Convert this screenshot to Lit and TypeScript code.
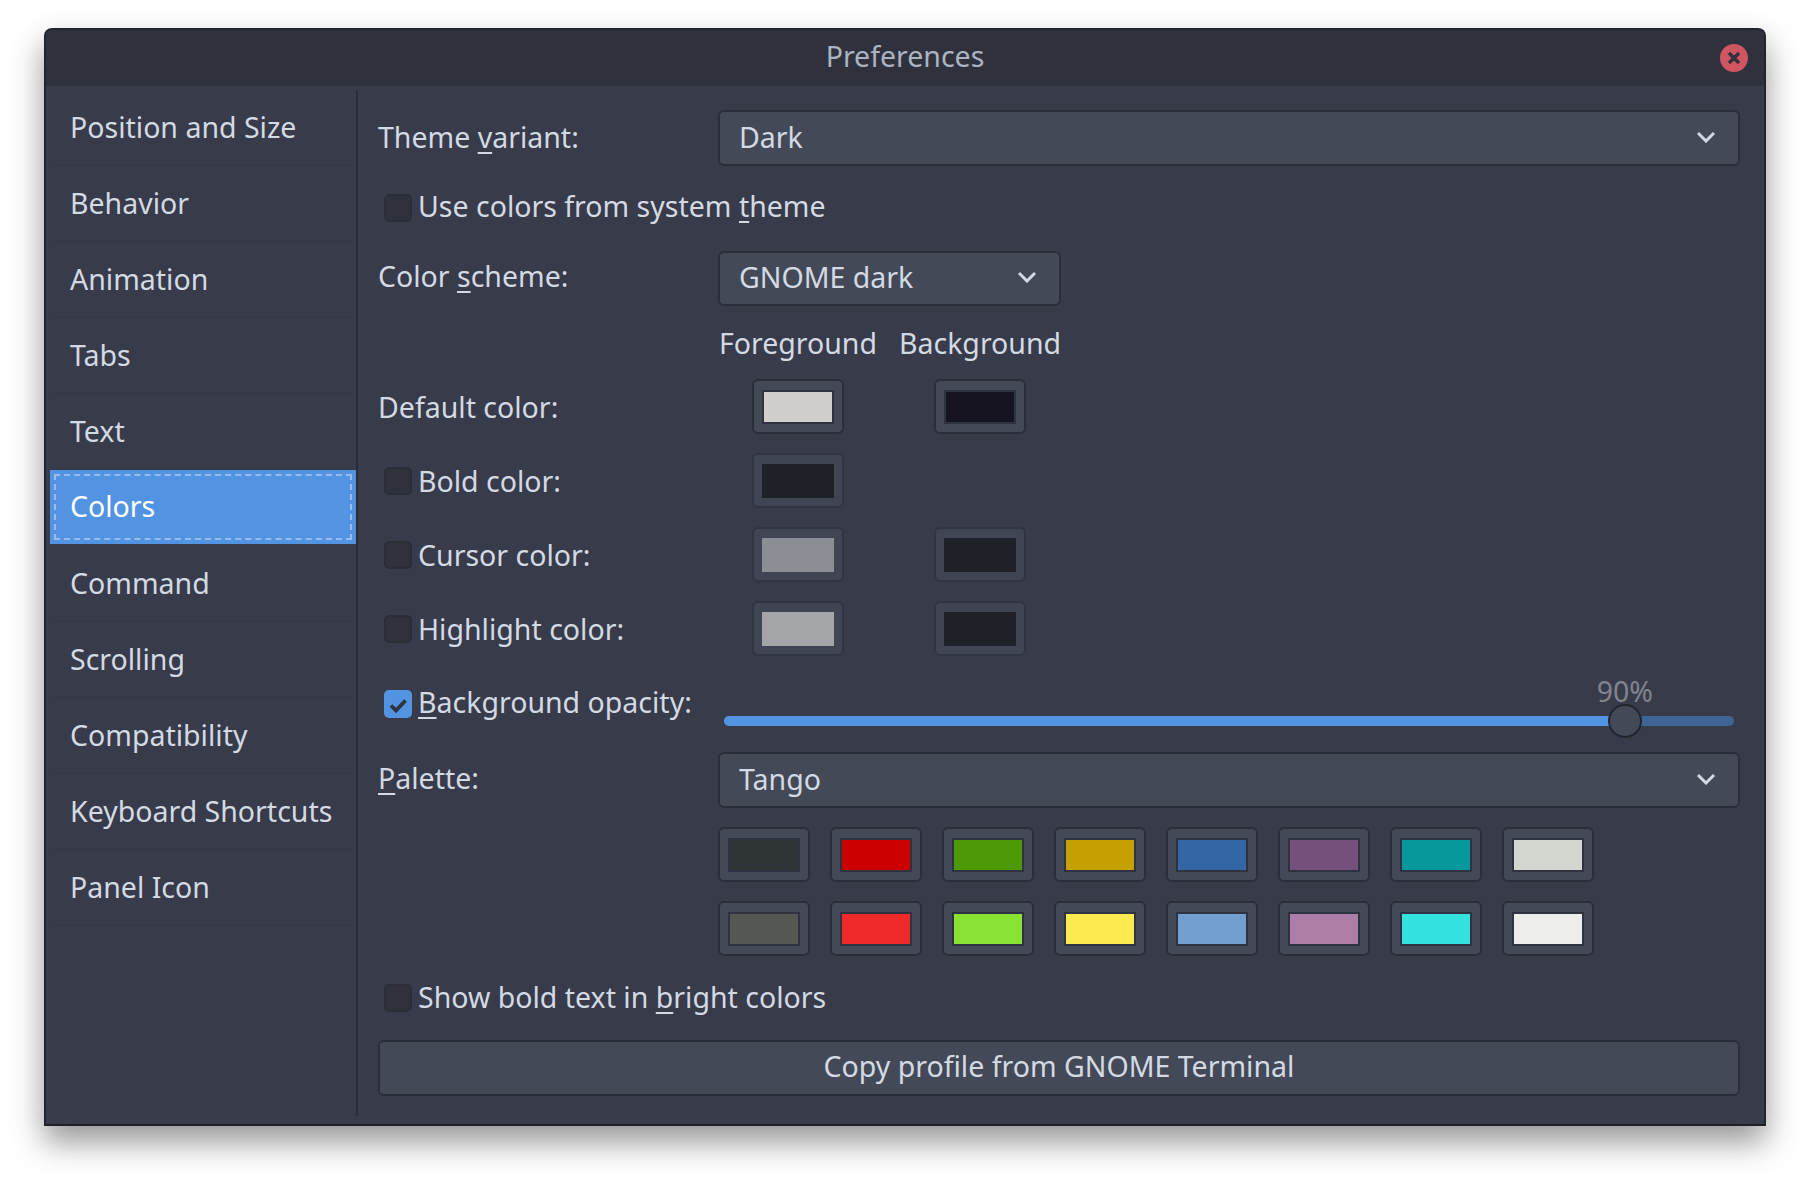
import { LitElement, html, css, svg } from 'lit';
import { customElement, state } from 'lit/decorators.js';

const PAGES = [
  'Position and Size', 'Behavior', 'Animation', 'Tabs', 'Text', 'Colors',
  'Command', 'Scrolling', 'Compatibility', 'Keyboard Shortcuts', 'Panel Icon',
];

const PALETTE = [
  '#2e3436', '#cc0000', '#4e9a06', '#c4a000', '#3465a4', '#75507b', '#06989a', '#d3d7cf',
  '#555753', '#ef2929', '#8ae234', '#fce94f', '#729fcf', '#ad7fa8', '#34e2e2', '#eeeeec',
];

const chevron = svg`<svg class="chevron" width="18" height="12" viewBox="0 0 18 12"><path d="M1 2 L9 10 L17 2" fill="none" stroke="#d3dae3" stroke-width="3"/></svg>`;

@customElement('app-root')
export class AppRoot extends LitElement {
  @state() private page = 'Colors';

  static styles = css`
    :host {
      display: block;
      height: 1186px;
      box-sizing: border-box;
      padding: 28px 44px 60px;
      background: #fff;
      font-family: 'Noto Sans', sans-serif;
      font-size: 28.5px;
      color: #d3dae3;
    }
    .window {
      height: 100%;
      box-sizing: border-box;
      display: flex;
      flex-direction: column;
      background: #383b4a;
      border: 2px solid #23252e;
      border-bottom-color: #1e1f27;
      border-radius: 8px 8px 0 0;
      box-shadow: 0 16px 32px rgba(0, 0, 0, 0.42);
    }
    .titlebar {
      position: relative;
      height: 56px;
      box-sizing: border-box;
      padding-bottom: 4px;
      flex: none;
      display: flex;
      align-items: center;
      justify-content: center;
      background: #2f323d;
      border-radius: 6px 6px 0 0;
      color: #acb3c1;
    }
    .close {
      position: absolute;
      right: 16px;
      top: 14px;
      width: 28px;
      height: 28px;
    }
    .body {
      flex: 1;
      min-height: 0;
      display: flex;
      padding: 4px 0 8px 4px;
    }
    .sidebar {
      width: 306px;
      flex: none;
      border-right: 2px solid #2b2d38;
    }
    .page {
      height: 75px;
      box-sizing: border-box;
      display: flex;
      align-items: center;
      padding: 0 0 2px 20px;
      margin-bottom: 1px;
      box-shadow: 0 1px 0 #343745;
      cursor: pointer;
    }
    .page.selected {
      height: 74px;
      margin-bottom: 2px;
      background: #5294e2;
      color: #fff;
      box-shadow: none;
      outline: 2px dashed rgba(255, 255, 255, 0.38);
      outline-offset: -6px;
    }
    .main {
      flex: 1;
      min-width: 0;
      display: grid;
      grid-template-columns: 340px 160px 23px 158px 1fr;
      grid-template-rows: 55px 44px 54px 33px 53px 53px 53px 53px 55px 55px 127px 43px 55px;
      grid-auto-rows: min-content;
      row-gap: 21px;
      align-items: center;
      padding: 20px 24px 0 20px;
    }
    .label {
      grid-column: 1;
    }
    .wide {
      grid-column: 2 / -1;
    }
    .full {
      grid-column: 1 / -1;
    }
    .col-fg {
      grid-column: 2;
    }
    .col-bg {
      grid-column: 4;
    }
    /* the glyphs sit lower than in the reference font, nudge per row */
    .up1 {
      padding-bottom: 2px;
    }
    .up2 {
      padding-bottom: 4px;
    }
    u {
      text-decoration-thickness: 2px;
      text-underline-offset: 4px;
    }
    .check-row {
      height: 42px;
      display: flex;
      align-items: center;
      gap: 6px;
      padding-left: 6px;
    }
    .check {
      width: 28px;
      height: 28px;
      box-sizing: border-box;
      flex: none;
      background: #2f323d;
      border: 2px solid #2b2d38;
      border-radius: 5px;
    }
    .check.on {
      background: #5294e2;
      border: none;
    }
    .combo {
      height: 56px;
      align-self: start;
      box-sizing: border-box;
      display: flex;
      align-items: center;
      justify-content: space-between;
      padding: 0 23px 0 19px;
      background: #444957;
      border: 2px solid #2b2d38;
      border-radius: 6px;
    }
    .combo.short {
      width: 343px;
      height: 55px;
    }
    .chevron {
      margin-bottom: 2px;
    }
    .button {
      height: 56px;
      align-self: start;
      box-sizing: border-box;
      padding-bottom: 4px;
      display: flex;
      align-items: center;
      justify-content: center;
      background: #444957;
      border: 2px solid #2b2d38;
      border-radius: 6px;
    }
    .head {
      display: flex;
      justify-content: center;
      white-space: nowrap;
    }
    .cell {
      display: flex;
      justify-content: center;
    }
    .swatch {
      width: 92px;
      height: 55px;
      margin: -1px;
      box-sizing: border-box;
      display: flex;
      align-items: center;
      justify-content: center;
      background: #444957;
      border: 2px solid #2b2d38;
      border-radius: 6px;
    }
    .swatch.off {
      background: #404553;
      border-color: #323541;
    }
    .swatch i {
      display: block;
      width: 72px;
      height: 34px;
      box-sizing: border-box;
      border: 2px solid #2f3240;
    }
    .swatch.off i {
      border-color: transparent;
    }
    .slider {
      position: relative;
      height: 55px;
      margin: 0 6px;
    }
    .track {
      position: absolute;
      left: 0;
      right: 0;
      bottom: 5px;
      height: 10px;
      border-radius: 5px;
      background: #3e6596;
      overflow: hidden;
    }
    .fill {
      height: 100%;
      background: #5294e2;
    }
    .handle {
      position: absolute;
      bottom: -7px;
      width: 34px;
      height: 34px;
      box-sizing: border-box;
      margin-left: -17px;
      background: #444957;
      border: 2px solid #23252e;
      border-radius: 50%;
    }
    .value {
      position: absolute;
      bottom: 21px;
      transform: translateX(-50%);
      color: #81848d;
    }
    .palette {
      display: grid;
      grid-template-columns: repeat(8, 90px);
      column-gap: 22px;
      row-gap: 21px;
      padding-left: 1px;
    }
  `;

  private _swatch(color: string, off = false) {
    return html`<div class="swatch ${off ? 'off' : ''}"><i style="background-color:${color}"></i></div>`;
  }

  private _checkRow(label: unknown, on = false, nudge = '') {
    return html`
      <div class="check-row">
        <div class="check ${on ? 'on' : ''}">
          ${on ? svg`<svg width="28" height="28" viewBox="0 0 28 28"><path d="M7 13.5 L12 18.5 L21.5 8.5" fill="none" stroke="#2f343f" stroke-width="3.8"/></svg>` : ''}
        </div>
        <span class=${nudge}>${label}</span>
      </div>
    `;
  }

  render() {
    return html`
      <div class="window">
        <div class="titlebar">
          Preferences
          <svg class="close" viewBox="0 0 28 28">
            <circle cx="14" cy="14" r="14" fill="#cf5560"/>
            <path d="M9 9 L19 19 M19 9 L9 19" stroke="#2f323d" stroke-width="3.4" fill="none"/>
          </svg>
        </div>
        <div class="body">
          <div class="sidebar">
            ${PAGES.map(p => html`
              <div class="page ${p === this.page ? 'selected' : ''}" @click=${() => this.page = p}>${p}</div>
            `)}
          </div>
          <div class="main">
            <div class="label up1">Theme <u>v</u>ariant:</div>
            <div class="combo wide"><span class="up1">Dark</span>${chevron}</div>

            <div class="full">${this._checkRow(html`Use colors from system <u>t</u>heme`, false, 'up2')}</div>

            <div class="label up2">Color <u>s</u>cheme:</div>
            <div class="wide"><div class="combo short"><span class="up1">GNOME dark</span>${chevron}</div></div>

            <div class="head col-fg">Foreground</div>
            <div class="head col-bg">Background</div>

            <div class="label">Default color:</div>
            <div class="cell col-fg">${this._swatch('#d0cfcc')}</div>
            <div class="cell col-bg">${this._swatch('#171421')}</div>

            <div class="label">${this._checkRow('Bold color:')}</div>
            <div class="cell col-fg">${this._swatch('#1e2128', true)}</div>

            <div class="label">${this._checkRow('Cursor color:')}</div>
            <div class="cell col-fg">${this._swatch('#8b8e95', true)}</div>
            <div class="cell col-bg">${this._swatch('#1e2128', true)}</div>

            <div class="label">${this._checkRow('Highlight color:')}</div>
            <div class="cell col-fg">${this._swatch('#a3a5a9', true)}</div>
            <div class="cell col-bg">${this._swatch('#1e2128', true)}</div>

            <div class="label">${this._checkRow(html`<u>B</u>ackground opacity:`, true, 'up2')}</div>
            <div class="wide slider">
              <div class="value" style="left:89.2%">90%</div>
              <div class="track"><div class="fill" style="width:89.2%"></div></div>
              <div class="handle" style="left:89.2%"></div>
            </div>

            <div class="label up2"><u>P</u>alette:</div>
            <div class="combo wide"><span class="up1">Tango</span>${chevron}</div>

            <div class="wide palette">${PALETTE.map(c => this._swatch(c))}</div>

            <div class="full">${this._checkRow(html`Show bold text in <u>b</u>right colors`, false, 'up1')}</div>

            <div class="button full">Copy profile from GNOME Terminal</div>
          </div>
        </div>
      </div>
    `;
  }
}

declare global {
  interface HTMLElementTagNameMap {
    'app-root': AppRoot;
  }
}
